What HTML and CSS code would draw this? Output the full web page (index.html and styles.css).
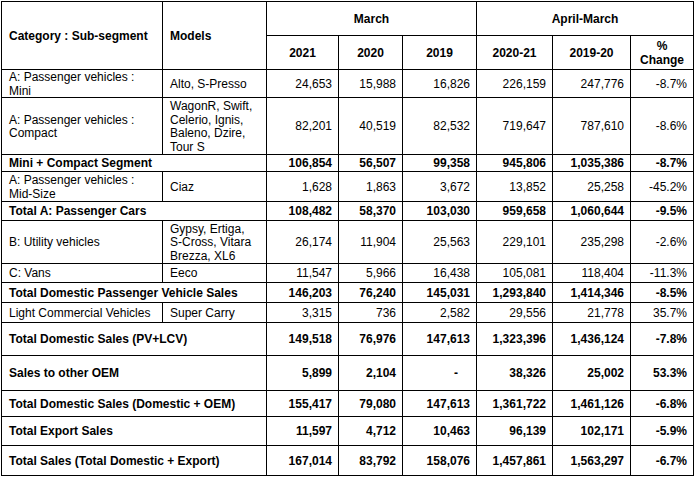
FILE: index.html
```html
<!DOCTYPE html>
<html>
<head>
<meta charset="utf-8">
<link rel="stylesheet" href="styles.css">
</head>
<body>
<div class="sheet">
  <div class="c b l hd span2r">Category : Sub-segment</div>
  <div class="c b l hd span2r">Models</div>
  <div class="c b ctr span3c">March</div>
  <div class="c b ctr span3c">April-March</div>
  <div class="c b ctr">2021</div>
  <div class="c b ctr">2020</div>
  <div class="c b ctr">2019</div>
  <div class="c b ctr">2020-21</div>
  <div class="c b ctr">2019-20</div>
  <div class="c b ctr">%<br>Change</div>

  <div class="c l">A: Passenger vehicles :<br>Mini</div>
  <div class="c l">Alto, S-Presso</div>
  <div class="c r">24,653</div><div class="c r">15,988</div><div class="c r">16,826</div><div class="c r">226,159</div><div class="c r">247,776</div><div class="c r">-8.7%</div>

  <div class="c l">A: Passenger vehicles :<br>Compact</div>
  <div class="c l">WagonR, Swift,<br>Celerio, Ignis,<br>Baleno, Dzire,<br>Tour S</div>
  <div class="c r">82,201</div><div class="c r">40,519</div><div class="c r">82,532</div><div class="c r">719,647</div><div class="c r">787,610</div><div class="c r">-8.6%</div>

  <div class="c l b span2c">Mini + Compact Segment</div>
  <div class="c r b">106,854</div><div class="c r b">56,507</div><div class="c r b">99,358</div><div class="c r b">945,806</div><div class="c r b">1,035,386</div><div class="c r b">-8.7%</div>

  <div class="c l">A: Passenger vehicles :<br>Mid-Size</div>
  <div class="c l">Ciaz</div>
  <div class="c r">1,628</div><div class="c r">1,863</div><div class="c r">3,672</div><div class="c r">13,852</div><div class="c r">25,258</div><div class="c r">-45.2%</div>

  <div class="c l b span2c">Total A: Passenger Cars</div>
  <div class="c r b">108,482</div><div class="c r b">58,370</div><div class="c r b">103,030</div><div class="c r b">959,658</div><div class="c r b">1,060,644</div><div class="c r b">-9.5%</div>

  <div class="c l">B: Utility vehicles</div>
  <div class="c l">Gypsy, Ertiga,<br>S-Cross, Vitara<br>Brezza, XL6</div>
  <div class="c r">26,174</div><div class="c r">11,904</div><div class="c r">25,563</div><div class="c r">229,101</div><div class="c r">235,298</div><div class="c r">-2.6%</div>

  <div class="c l">C: Vans</div>
  <div class="c l">Eeco</div>
  <div class="c r">11,547</div><div class="c r">5,966</div><div class="c r">16,438</div><div class="c r">105,081</div><div class="c r">118,404</div><div class="c r">-11.3%</div>

  <div class="c l b span2c">Total Domestic Passenger Vehicle Sales</div>
  <div class="c r b">146,203</div><div class="c r b">76,240</div><div class="c r b">145,031</div><div class="c r b">1,293,840</div><div class="c r b">1,414,346</div><div class="c r b">-8.5%</div>

  <div class="c l">Light Commercial Vehicles</div>
  <div class="c l">Super Carry</div>
  <div class="c r">3,315</div><div class="c r">736</div><div class="c r">2,582</div><div class="c r">29,556</div><div class="c r">21,778</div><div class="c r">35.7%</div>

  <div class="c l b span2c">Total Domestic Sales (PV+LCV)</div>
  <div class="c r b">149,518</div><div class="c r b">76,976</div><div class="c r b">147,613</div><div class="c r b">1,323,396</div><div class="c r b">1,436,124</div><div class="c r b">-7.8%</div>

  <div class="c l b span2c">Sales to other OEM</div>
  <div class="c r b">5,899</div><div class="c r b">2,104</div><div class="c r b dash">-</div><div class="c r b">38,326</div><div class="c r b">25,002</div><div class="c r b">53.3%</div>

  <div class="c l b span2c">Total Domestic Sales (Domestic + OEM)</div>
  <div class="c r b">155,417</div><div class="c r b">79,080</div><div class="c r b">147,613</div><div class="c r b">1,361,722</div><div class="c r b">1,461,126</div><div class="c r b">-6.8%</div>

  <div class="c l b span2c">Total Export Sales</div>
  <div class="c r b">11,597</div><div class="c r b">4,712</div><div class="c r b">10,463</div><div class="c r b">96,139</div><div class="c r b">102,171</div><div class="c r b">-5.9%</div>

  <div class="c l b span2c">Total Sales (Total Domestic + Export)</div>
  <div class="c r b">167,014</div><div class="c r b">83,792</div><div class="c r b">158,076</div><div class="c r b">1,457,861</div><div class="c r b">1,563,297</div><div class="c r b">-6.7%</div>
</div>
</body>
</html>
```
FILE: styles.css
```css
html, body {
  margin: 0;
  padding: 0;
  background: #fff;
}
body {
  font-family: "Liberation Sans", Arial, sans-serif;
  font-size: 12px;
  color: #000;
}
.sheet {
  display: grid;
  grid-template-columns: 160px 103px 71px 63px 73px 75px 77px 62px;
  grid-template-rows: 33px 33px 27px 56px 16px 29px 18px 42px 18px 19px 19px 32px 34px 25px 28px 29px;
  gap: 1px;
  padding: 1px;
  background: #000;
  width: max-content;
  margin: 1px 0 0 1px;
}
.c {
  background: #fff;
  display: flex;
  flex-direction: column;
  justify-content: center;
  line-height: 13.5px;
  padding-top: 2px;
  white-space: nowrap;
  overflow: hidden;
}
.l { align-items: flex-start; padding-left: 7px; }
.r { align-items: flex-end; padding-right: 6px; }
.ctr { align-items: center; text-align: center; }
.b { font-weight: bold; }
.span2r { grid-row: span 2; }
.span3c { grid-column: span 3; }
.span2c { grid-column: span 2; }
.dash { padding-right: 18px; }
```
